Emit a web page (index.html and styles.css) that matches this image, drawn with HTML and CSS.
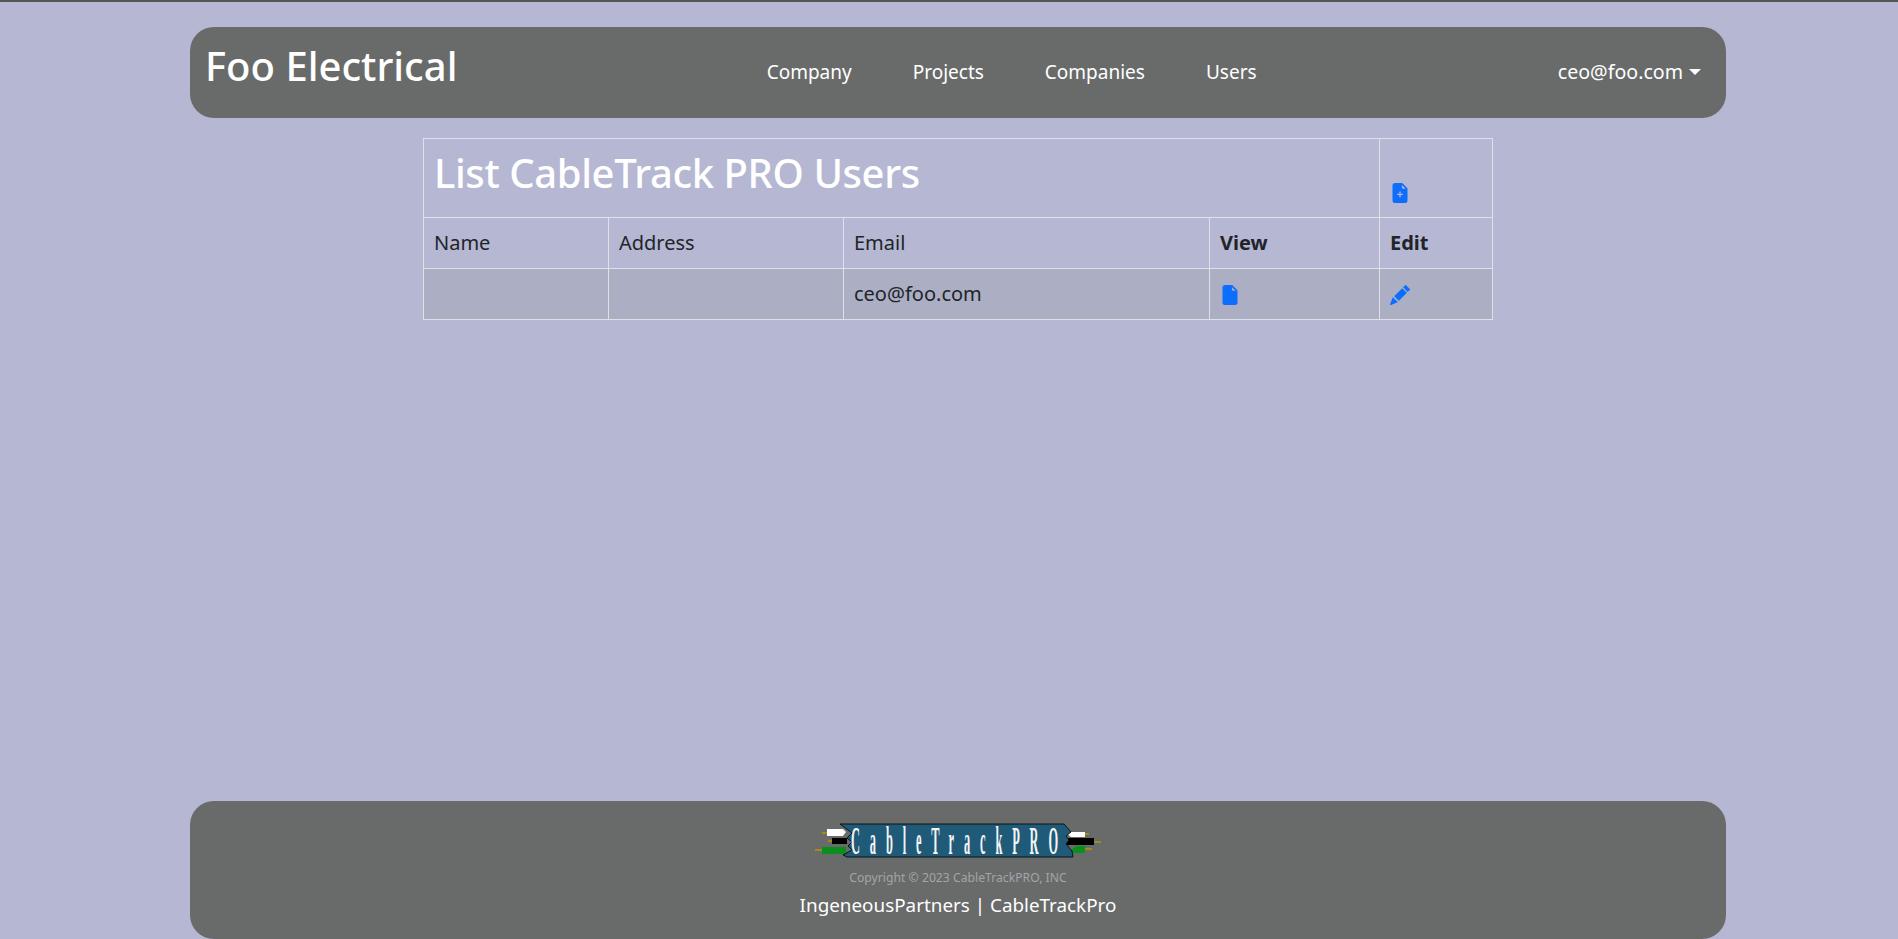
FILE: index.html
```html
<!DOCTYPE html>
<html lang="en">
<head>
    <meta charset="UTF-8">
    <meta name="viewport" content="width=device-width, initial-scale=1.0">
    <title>List CableTrack PRO Users</title>
    <link rel="stylesheet" href="styles.css">
</head>
<body>
    <div class="page">
        <header class="topbar">
            <a class="brand" href="#">Foo Electrical</a>
            <nav class="nav">
                <a href="#">Company</a>
                <a href="#">Projects</a>
                <a href="#">Companies</a>
                <a href="#">Users</a>
            </nav>
            <a class="user" href="#">ceo@foo.com<span class="caret"></span></a>
        </header>

        <main class="content">
            <table class="list">
                <colgroup>
                    <col class="col-name">
                    <col class="col-address">
                    <col class="col-email">
                    <col class="col-view">
                    <col class="col-edit">
                </colgroup>
                <tr class="title-row">
                    <td colspan="4"><h1>List CableTrack PRO Users</h1></td>
                    <td class="add-cell">
                        <a href="#"><svg class="icon" viewBox="0 0 16 16"><path d="M9.293 0H4a2 2 0 0 0-2 2v12a2 2 0 0 0 2 2h8a2 2 0 0 0 2-2V4.707A1 1 0 0 0 13.707 4L10 .293A1 1 0 0 0 9.293 0zM9.5 3.5v-2l3 3h-2a1 1 0 0 1-1-1zM8.5 7v1.5H10a.5.5 0 0 1 0 1H8.5V11a.5.5 0 0 1-1 0V9.5H6a.5.5 0 0 1 0-1h1.5V7a.5.5 0 0 1 1 0z"/></svg></a>
                    </td>
                </tr>
                <tr>
                    <td>Name</td>
                    <td>Address</td>
                    <td>Email</td>
                    <th>View</th>
                    <th>Edit</th>
                </tr>
                <tr class="striped">
                    <td></td>
                    <td></td>
                    <td>ceo@foo.com</td>
                    <td><a href="#"><svg class="icon" viewBox="0 0 16 16"><path d="M4 0h5.293A1 1 0 0 1 10 .293L13.707 4a1 1 0 0 1 .293.707V14a2 2 0 0 1-2 2H4a2 2 0 0 1-2-2V2a2 2 0 0 1 2-2zm5.5 1.5v2a1 1 0 0 0 1 1h2l-3-3z"/></svg></a></td>
                    <td><a href="#"><svg class="icon" viewBox="0 0 16 16"><path d="M12.854.146a.5.5 0 0 0-.707 0L10.5 1.793 14.207 5.5l1.647-1.646a.5.5 0 0 0 0-.708l-3-3zm.646 6.061L9.793 2.5 3.293 9H3.5a.5.5 0 0 1 .5.5v.5h.5a.5.5 0 0 1 .5.5v.5h.5a.5.5 0 0 1 .5.5v.5h.5a.5.5 0 0 1 .5.5v.207l6.5-6.5zm-7.468 7.468A.5.5 0 0 1 6 13.5V13h-.5a.5.5 0 0 1-.5-.5V12h-.5a.5.5 0 0 1-.5-.5V11h-.5a.5.5 0 0 1-.5-.5V10h-.5a.499.499 0 0 1-.175-.032l-.179.178a.5.5 0 0 0-.11.168l-2 5a.5.5 0 0 0 .65.65l5-2a.5.5 0 0 0 .168-.11l.178-.178z"/></svg></a></td>
                </tr>
            </table>
        </main>

        <footer class="bottombar">
            <svg class="logo" viewBox="0 -6 286 46">
                <!-- wires, left -->
                <rect x="7" y="8" width="6" height="2" fill="#a08a1c"/>
                <path d="M12 5H28L31 8L28 12H12Z" fill="#fff"/>
                <rect x="13" y="16" width="5" height="2" fill="#a08a1c"/>
                <rect x="17" y="14" width="15" height="6" fill="#000"/>
                <rect x="0" y="25" width="8" height="2" fill="#a08a1c"/>
                <rect x="7" y="23" width="24" height="7" fill="#0a8f1e"/>
                <!-- wires, right -->
                <rect x="269" y="9" width="5" height="2" fill="#a08a1c"/>
                <path d="M250 8H270V13H256Z" fill="#fff"/>
                <rect x="278" y="17" width="8" height="2" fill="#a08a1c"/>
                <rect x="250" y="14" width="29" height="7" fill="#000"/>
                <rect x="269" y="24" width="8" height="2" fill="#a08a1c"/>
                <path d="M252 28L262 22H270V29H254Z" fill="#0a8f1e"/>
                <!-- banner -->
                <path d="M25 0H249L256 8L251 12L254 16L251 20L257 27L258 33H32L28 31L37 26L33 22L37 18L32 14L37 9Z" fill="#1f5b78" stroke="#111" stroke-width="1"/>
                <text class="logo-text" transform="translate(36 30) scale(.62 2)" textLength="334" lengthAdjust="spacing">CableTrackPRO</text>
            </svg>
            <p class="copyright">Copyright © 2023 CableTrackPRO, INC</p>
            <p class="credits">IngeneousPartners | CableTrackPro</p>
        </footer>
    </div>
</body>
</html>
```

FILE: styles.css
```css
* {
    box-sizing: border-box;
}

body {
    margin: 0;
    padding-left: 18px;
    background-color: #b6b7d3;
    border-top: 2px solid #555;
    font-family: "Noto Sans", sans-serif;
    font-size: 20px;
    color: #212529;
}

a {
    color: inherit;
    text-decoration: none;
}

.page {
    width: 1536px;
    height: 937px;
    margin: 0 auto;
    padding-top: 25px;
    display: flex;
    flex-direction: column;
}

.topbar {
    height: 91px;
    flex: none;
    padding: 0 25px 2px 15px;
    display: flex;
    align-items: center;
    justify-content: space-between;
    background-color: #696b6a;
    border-radius: 24px;
    color: #fff;
}

.brand {
    font-size: 40px;
    font-weight: 500;
    line-height: 48px;
    margin-bottom: 12px;
}

.nav {
    display: flex;
    column-gap: 61px;
    margin-left: 8px;
    font-size: 19px;
}

.user {
    font-size: 19.6px;
}

.caret {
    display: inline-block;
    margin-left: 6px;
    vertical-align: 4px;
    border-top: 6px solid #fff;
    border-left: 6px solid transparent;
    border-right: 6px solid transparent;
}

.content {
    flex: 1;
    padding-top: 20px;
}

.list {
    width: 1069px;
    margin: 0 auto;
    table-layout: fixed;
    border-collapse: collapse;
}

.col-name { width: 185px; }
.col-address { width: 235px; }
.col-email { width: 366px; }
.col-view { width: 170px; }
.col-edit { width: 113px; }

.list td,
.list th {
    height: 51px;
    padding: 10px;
    border: 1px solid #dee2e6;
    text-align: left;
    font-weight: 400;
    line-height: 30px;
}

.list th {
    font-weight: 700;
}

.title-row td {
    height: 79px;
}

.list h1 {
    margin: 0 0 10px;
    font-size: 40px;
    font-weight: 500;
    letter-spacing: -0.4px;
    line-height: 48px;
    color: #fff;
}

.striped td {
    background-color: #acaec4;
}

.icon {
    display: inline-block;
    width: 20px;
    height: 20px;
    vertical-align: -4px;
    fill: #0d6efd;
}

.add-cell {
    vertical-align: bottom;
}

.bottombar {
    height: 138px;
    flex: none;
    padding-top: 23px;
    display: flex;
    flex-direction: column;
    align-items: center;
    background-color: #696b6a;
    border-radius: 24px;
    color: #fff;
}

.logo {
    width: 286px;
    height: 46px;
    margin: -6px 0;
    flex: none;
}

.logo-text {
    font-family: "Liberation Serif", serif;
    font-size: 20px;
    font-weight: 700;
    fill: #f4f4f4;
}

.copyright {
    margin: 11px 0 0;
    font-size: 12.2px;
    line-height: 18px;
    color: #a0a5a8;
}

.credits {
    margin: 3px 0 0;
    font-size: 18.85px;
    line-height: 30px;
}
```
